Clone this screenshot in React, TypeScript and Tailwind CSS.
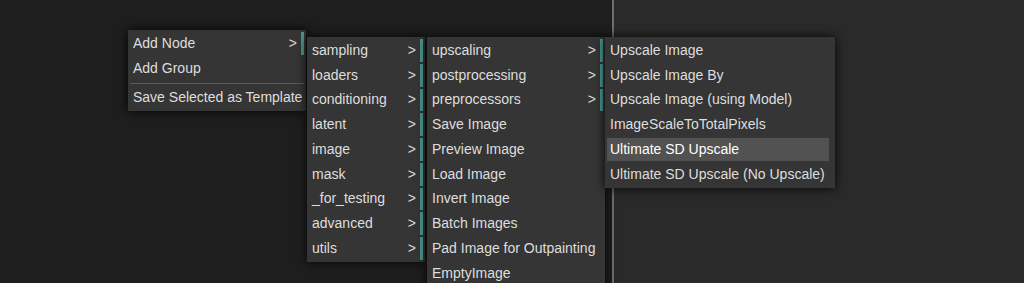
type Entry = {
  label?: string;
  submenu?: boolean;
  active?: boolean;
  separator?: boolean;
};

type MenuProps = {
  entries: Entry[];
  className: string;
};

function ContextMenu({ entries, className }: MenuProps) {
  return (
    <div
      className={`absolute flex flex-col bg-[#353535] px-[2px] py-[1px] shadow-[0_0_10px_rgba(0,0,0,0.9)] ${className}`}
    >
      {entries.map((entry, i) =>
        entry.separator ? (
          <div key={i} className="my-[2px] h-[1px] bg-[#5a5a5a]" />
        ) : (
          <div
            key={i}
            className={`my-[1px] flex h-[22.75px] items-center justify-between pl-[3px] whitespace-nowrap ${
              entry.active ? "mr-[4px] bg-[#525252] text-white" : "text-[#dedede]"
            } ${entry.submenu ? "border-r-[3px] border-[#4d9a94] pr-[4px]" : "pr-[6px]"}`}
          >
            <span>{entry.label}</span>
            {entry.submenu && <span className="text-[#d8d8d8]">&gt;</span>}
          </div>
        )
      )}
    </div>
  );
}

export default function App() {
  const root: Entry[] = [
    { label: "Add Node", submenu: true },
    { label: "Add Group" },
    { separator: true },
    { label: "Save Selected as Template" },
  ];

  const categories: Entry[] = [
    "sampling",
    "loaders",
    "conditioning",
    "latent",
    "image",
    "mask",
    "_for_testing",
    "advanced",
    "utils",
  ].map((label) => ({ label, submenu: true }));

  const imageNodes: Entry[] = [
    { label: "upscaling", submenu: true },
    { label: "postprocessing", submenu: true },
    { label: "preprocessors", submenu: true },
    { label: "Save Image" },
    { label: "Preview Image" },
    { label: "Load Image" },
    { label: "Invert Image" },
    { label: "Batch Images" },
    { label: "Pad Image for Outpainting" },
    { label: "EmptyImage" },
  ];

  const upscaling: Entry[] = [
    { label: "Upscale Image" },
    { label: "Upscale Image By" },
    { label: "Upscale Image (using Model)" },
    { label: "ImageScaleToTotalPixels" },
    { label: "Ultimate SD Upscale", active: true },
    { label: "Ultimate SD Upscale (No Upscale)" },
  ];

  return (
    <div className="relative flex h-[283px] w-[1024px] overflow-hidden font-['Liberation_Sans',Arial,sans-serif] text-[14px]">
      <div className="w-[612px] bg-[#1e1e1e]" />
      <div className="w-[2px] bg-[#6e6e6e]" />
      <div className="flex-1 bg-[#2a2a2a]" />

      <ContextMenu entries={root} className="left-[128px] top-[30px] w-[178px]" />
      <ContextMenu entries={categories} className="left-[307px] top-[37px] w-[118px]" />
      <ContextMenu entries={imageNodes} className="left-[427px] top-[37px] w-[178px]" />
      <ContextMenu entries={upscaling} className="left-[605px] top-[37px] w-[230px]" />
    </div>
  );
}
